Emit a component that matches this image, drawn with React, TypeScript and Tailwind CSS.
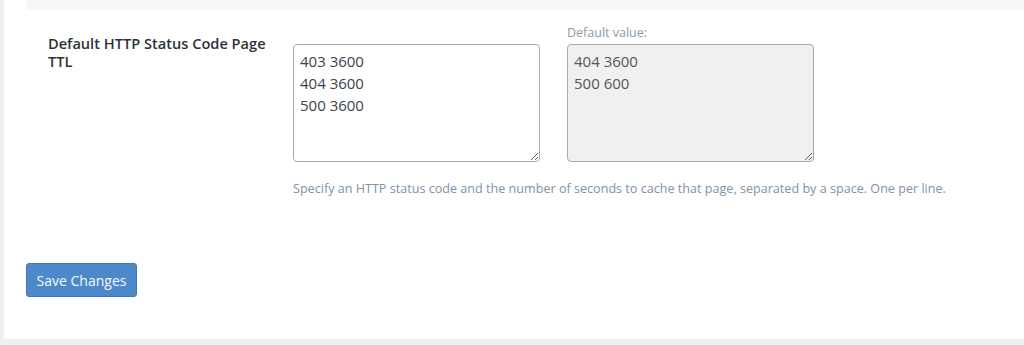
export default function App() {
  return (
    <div
      className="h-[345px] w-[1024px] bg-[#f0f0f1] overflow-hidden"
      style={{ fontFamily: '"Open Sans", "Noto Sans", sans-serif' }}
    >
      <div className="ml-[4px] h-[339px] bg-white">
        <div className="ml-[22px] h-[10px] bg-[#f6f7f7]" />
        <div className="flex pl-[44px] pt-[16px]">
          <div className="w-[245px] pt-[8px] pr-[15px] text-[14.6px] font-semibold leading-[18px] text-[#2c3338]">
            Default HTTP Status Code Page TTL
          </div>
          <div className="flex flex-col">
            <div className="flex gap-[27px]">
              <div className="flex flex-col pt-[18px]">
                <textarea
                  readOnly
                  className="h-[118px] w-[247px] resize-y rounded-[4px] border border-[#a7aaad] bg-white px-[6px] py-[5px] text-[15px] leading-[22px] text-[#3c434a] outline-none"
                  defaultValue={"403 3600\n404 3600\n500 3600"}
                />
              </div>
              <div className="flex flex-col">
                <div className="mb-[4px] h-[14px] text-[12.5px] leading-[14px] text-[#8b9aa8]">Default value:</div>
                <textarea
                  readOnly
                  className="h-[118px] w-[247px] resize-y rounded-[4px] border border-[#a7aaad] bg-[#f0f0f0] px-[6px] py-[5px] text-[15px] leading-[22px] text-[#50575e] outline-none"
                  defaultValue={"404 3600\n500 600"}
                />
              </div>
            </div>
            <p className="mt-[18px] text-[12.6px] leading-[18px] text-[#7f93a6]">
              Specify an HTTP status code and the number of seconds to cache that page, separated by a space. One per line.
            </p>
          </div>
        </div>
        <div className="pl-[22px] pt-[65px]">
          <button className="h-[34px] w-[111px] rounded-[3px] border border-[#3f78b9] bg-[#4d89c9] text-[14px] text-[#f4f8fc]">
            Save Changes
          </button>
        </div>
      </div>
    </div>
  );
}
